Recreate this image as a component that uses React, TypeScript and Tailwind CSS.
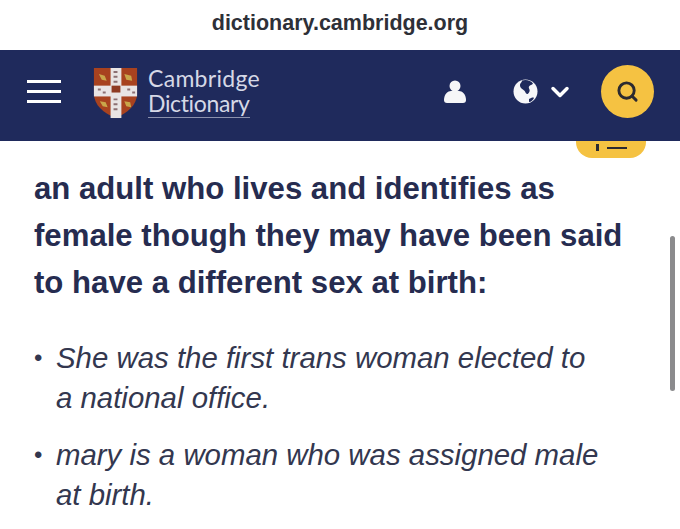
import { Search, ChevronDown } from 'lucide-react';

function Crest() {
  return (
    <svg width="45" height="51" viewBox="0 0 44 52" className="shrink-0">
      <path d="M0 0H44V26C44 38 34 46 22 51C10 46 0 38 0 26Z" fill="#a8421f" />
      <rect x="17" y="0" width="11" height="51" fill="#e9e4e4" />
      <rect x="0" y="18" width="44" height="11" fill="#e9e4e4" />
      <rect x="18" y="18" width="9" height="7" fill="#8f3a22" />
      <path d="M5 6l6 2 2 5-5-1zM31 6l7 2 1 5-6-1zM6 34l6 1 2 5-5-1zM31 34l6 1 1 5-5-1z" fill="#c9a64a" />
      <path d="M20 4h4M20 9h4M20 14h4M20 32h4M20 37h4M20 42h4" stroke="#8c6f72" strokeWidth="2" />
      <path d="M4 22h3M9 25h3M34 22h3M39 25h3" stroke="#8c6f72" strokeWidth="2" />
    </svg>
  );
}

function Globe() {
  return (
    <svg width="25" height="25" viewBox="0 0 25 25" className="shrink-0">
      <circle cx="12.5" cy="12.5" r="12" fill="#f6f6f8" />
      <path d="M9 1.5c4-1.5 9 0 11 3-1 2-3 1-4 3s2 3 0 6-3 1-4-1-5-3-5-6 2-3 2-5zM16 20c2-1 4-2 5-1-1 2-3 4-5 4z" fill="#1f2a5c" />
    </svg>
  );
}

function User() {
  return (
    <svg width="22" height="23" viewBox="0 0 22 23" className="shrink-0">
      <circle cx="11" cy="6" r="5.5" fill="#f6f6f8" />
      <path d="M0 20c0-6 4-9 7-9h8c3 0 7 3 7 9 0 2-1 3-3 3H3c-2 0-3-1-3-3z" fill="#f6f6f8" />
    </svg>
  );
}

export default function App() {
  return (
    <div className="relative h-[529px] w-[680px] overflow-hidden bg-white font-['Liberation_Sans',Arial,sans-serif]">
      <div className="flex h-[50px] items-center justify-center pb-[3px] text-[21.5px] font-bold text-[#2e3038]">
        dictionary.cambridge.org
      </div>

      <header className="flex h-[91px] items-center bg-[#1f2a5c] pb-[8px] pl-[27px] pr-[26px]">
        <div className="flex w-[34px] flex-col gap-[7px]">
          <span className="h-[3px] bg-white" />
          <span className="h-[3px] bg-white" />
          <span className="h-[3px] bg-white" />
        </div>
        <div className="ml-[32px] mt-[4px]">
          <Crest />
        </div>
        <div className="ml-[10px] font-['Lato',sans-serif] text-[23px] leading-[25px] text-[#d5d8e6]">
          <div className="tracking-[0.3px]">Cambridge</div>
          <div className="w-fit border-b border-[#8b91ad] pb-[1px] tracking-[-0.35px]">Dictionary</div>
        </div>
        <div className="ml-auto flex items-center">
          <User />
          <div className="ml-[47px]">
            <Globe />
          </div>
          <ChevronDown className="ml-[8px] text-white" size={28} strokeWidth={3} />
          <div className="ml-[27px] flex h-[53px] w-[53px] items-center justify-center rounded-full bg-[#f5c242]">
            <Search size={23} strokeWidth={3} className="text-[#2c2a30]" />
          </div>
        </div>
      </header>

      <div className="absolute left-[576px] top-[141px] flex h-[17px] w-[70px] justify-center gap-[8px] rounded-b-[16px] bg-[#f5c242] pt-[3px]">
        <span className="h-[7px] w-[3px] bg-[#2c2a30]" />
        <span className="mt-[3px] h-[2px] w-[20px] bg-[#2c2a30]" />
      </div>

      <main className="flex pl-[34px] pr-[5px] pt-[24px]">
        <div className="min-w-0 flex-1 whitespace-nowrap">
          <p className="text-[31.15px] font-bold leading-[47px] text-[#262c50]">
            an adult who lives and identifies as
            <br />
            female though they may have been said
            <br />
            to have a different sex at birth:
          </p>
          <ul className="mt-[32px] text-[29.4px] italic leading-[40px] text-[#33374f]">
            <li className="flex">
              <span className="w-[22px] shrink-0 text-[24px] not-italic">•</span>
              <span>
                She was the first trans woman elected to
                <br />
                a national office.
              </span>
            </li>
            <li className="mt-[17px] flex">
              <span className="w-[22px] shrink-0 text-[24px] not-italic">•</span>
              <span>
                mary is a woman who was assigned male
                <br />
                at birth.
              </span>
            </li>
          </ul>
        </div>
        <div className="mt-[71px] h-[155px] w-[5px] shrink-0 rounded-full bg-[#8b8b8d]" />
      </main>
    </div>
  );
}
